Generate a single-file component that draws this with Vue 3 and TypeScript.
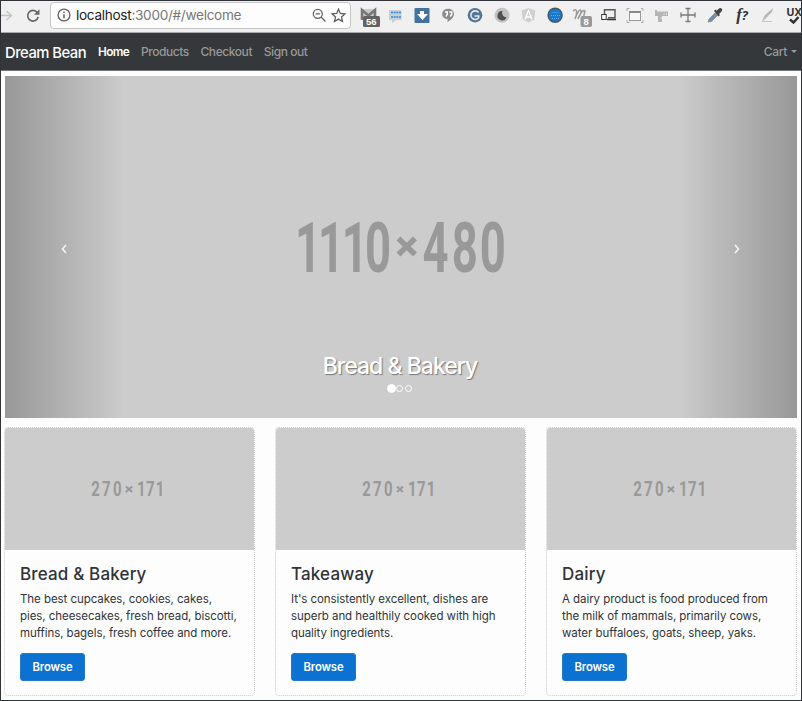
<script setup lang="ts">
interface Category {
  title: string
  lines: string[]
}

const links: string[] = ['Home', 'Products', 'Checkout', 'Sign out']

const categories: Category[] = [
  {
    title: 'Bread & Bakery',
    lines: ['The best cupcakes, cookies, cakes,', 'pies, cheesecakes, fresh bread, biscotti,', 'muffins, bagels, fresh coffee and more.'],
  },
  {
    title: 'Takeaway',
    lines: ["It's consistently excellent, dishes are", 'superb and healthily cooked with high', 'quality ingredients.'],
  },
  {
    title: 'Dairy',
    lines: ['A dairy product is food produced from', 'the milk of mammals, primarily cows,', 'water buffaloes, goats, sheep, yaks.'],
  },
]
</script>

<template>
  <div class="window">
    <header class="toolbar">
      <svg class="nav-icons" width="49" height="32" viewBox="0 0 49 32">
        <path d="M0 13.500H11M6.500 9l5 4.500-5 4.500" fill="none" stroke="#c4c4c4" stroke-width="1.300" />
        <path d="M37.300 10.600A5.300 5.300 0 1 0 38.200 14.800" fill="none" stroke="#686868" stroke-width="1.700" />
        <path d="M39.500 7.200v5.600h-5.600z" fill="#686868" />
      </svg>
      <div class="address">
        <svg width="14" height="14" viewBox="0 0 14 14">
          <circle cx="7" cy="7" r="5.900" fill="none" stroke="#606060" stroke-width="1.300" />
          <path d="M7 6.200v4M7 3.500v1.500" stroke="#606060" stroke-width="1.500" />
        </svg>
        <span class="url"><b>localhost</b>:3000/#/welcome</span>
        <svg class="zoom" width="15" height="15" viewBox="0 0 15 15" fill="none" stroke="#666" stroke-width="1.300">
          <circle cx="5.800" cy="5.800" r="4.500" /><path d="M9 9l4.500 4.500M3.700 5.800h4.200" />
        </svg>
        <svg width="15" height="15" viewBox="0 0 15 15" fill="none" stroke="#606060" stroke-width="1.300">
          <path d="M7.500 1.200l1.800 4.200 4.700.4-3.500 3.100 1 4.600-4-2.400-4 2.400 1-4.600L1 5.800l4.700-.4z" />
        </svg>
      </div>
      <div class="extensions">
        <svg viewBox="-13 -16 26.5 32">
          <path d="M-9-7H6V4H-9z" fill="#c8c8c8" /><path d="M-8 4v-10l6.500 5.500L5-6V4" fill="none" stroke="#777" stroke-width="2.600" />
          <rect x="-7" y="0" width="17" height="11" rx="1.500" fill="#626262" />
          <text x="1.200" y="9.100" class="badge">56</text>
        </svg>
        <svg viewBox="-13 -16 26.5 32">
          <path d="M-8-6H4.500V4H-1l-4 3V4h-3z" fill="#cacfd4" /><path d="M-6-3.500H4M-6 1H4" stroke="#2f8ade" stroke-width="1.500" stroke-dasharray="2 .7" />
        </svg>
        <svg viewBox="-13 -16 26.5 32">
          <rect x="-8.500" y="-8" width="15" height="15" rx="1" fill="#44729f" /><path d="M-3-5H1v3h4l-5.500 6L-6-2h3z" fill="#fff" />
        </svg>
        <svg viewBox="-13 -16 26.5 32">
          <path d="M-1.800-7.300c-3.500 0-6 2.200-6 5.300 0 3.200 2.600 5 5.300 5v3c3.500-2 6.500-4.800 6.500-8 0-3.100-2.300-5.300-5.800-5.300z" fill="#8c8c8c" /><path d="M-5-4h2.300v2.500l-1.500 2M-.7-4h2.400v2.500l-1.500 2" fill="none" stroke="#fff" stroke-width="1.500" />
        </svg>
        <svg viewBox="-13 -16 26.5 32">
          <circle cx="-1" cy="-.8" r="7.300" fill="#58738f" /><path d="M2.500-3.600a4.300 4.300 0 1 0 .2 5.200V0H-1.500" fill="none" stroke="#dceaf8" stroke-width="1.600" />
        </svg>
        <svg viewBox="-13 -16 26.5 32">
          <circle cx="-1" cy="-.7" r="7.500" fill="#c2c2c2" /><path d="M-.5-5a4.700 4.700 0 1 0 4 6.500A4.500 4.500 0 0 1-.5-5z" fill="#505050" />
        </svg>
        <svg viewBox="-13 -16 26.5 32">
          <path d="M-.5-8l6.800 2.400-1 9L-.5 6.500l-5.800-3.100-1-9z" fill="#cfcfcf" /><path d="M-4 3.500l3.500-9 3.500 9M-2.600 1h4.200" fill="none" stroke="#fff" stroke-width="1.300" />
        </svg>
        <svg viewBox="-13 -16 26.5 32">
          <circle cx="-.9" cy="-.8" r="7" fill="#187bd2" stroke="#505860" stroke-width="1.500" /><path d="M-4.500-3.500h8M-5-.500h9M-4 2.500h7" stroke="#78b5eb" stroke-width=".8" stroke-dasharray="1 1" />
        </svg>
        <svg viewBox="-13 -16 26.5 32">
          <path d="M-9-5c5-4 4 3 2 8 2-6 5-11 6-8s-3 6-3 8c2-6 6-10 7-8L1 3" fill="none" stroke="#999" stroke-width="1.500" />
          <rect x="-1.500" y="0" width="11.500" height="11" rx="2" fill="#999" /><text x="4.200" y="9.100" class="badge">8</text>
        </svg>
        <svg viewBox="-13 -16 26.5 32">
          <path d="M-4.500-2v-4.300H6v8H-1" fill="none" stroke="#555" stroke-width="1.400" /><rect x="-7.300" y="-1.500" width="4.500" height="5" fill="#fff" stroke="#333" /><path d="M-2 3.500h9" stroke="#333" stroke-width="1.500" />
        </svg>
        <svg viewBox="-13 -16 26.5 32">
          <rect x="-5.500" y="-4.500" width="11" height="9" fill="#f6f6f6" stroke="#999" /><path d="M-5.500-4h11" stroke="#888" stroke-width="2" /><path d="M-8-5v-2.500h2.500M6-7.500h2V-5M-8 4v2.500h2.500M6 6.500h2V4" fill="none" stroke="#aaa" />
        </svg>
        <svg viewBox="-13 -16 26.5 32">
          <path d="M-7-6h2v1.500H6V0H0v6h-4V0h-3z" fill="#b5b5b5" /><path d="M-2 2h2M2-3v2M4.500-3v2" stroke="#dedede" />
        </svg>
        <svg viewBox="-13 -16 26.5 32">
          <path d="M-7-1H7M0-7V5.500M-7-3.500v5M7-3.500v5M-2.500-7.500h5M-2.500 5.500h5" fill="none" stroke="#787878" stroke-width="1.300" />
        </svg>
        <svg viewBox="-13 -16 26.5 32">
          <path d="M-7 6l1-3 6-6 2.500 2.500-6 6z" fill="#6c8fae" stroke="#888" stroke-width=".7" /><path d="M-1-5L.500-6.500l1.300 1.300C4-8 5.500-8.500 6.800-7.200S6.500-4 4-2l1 1-1.500 1.500z" fill="#444" />
        </svg>
        <svg viewBox="-13 -16 26.5 32"><text x="1" y="4" class="font-query"><tspan class="letter-f">f</tspan>?</text></svg>
        <svg viewBox="-13 -16 26.5 32">
          <path d="M-6 5l3-6 8-7-1 4-8 8z" fill="#b8b8b8" /><path d="M-6 5.500H4" stroke="#c4c4c4" />
        </svg>
        <svg viewBox="-13 -16 26.5 32"><text x="0" y="-.200" class="ux">UX</text><path d="M-4 3.500L-.5 6.500l5-5.500" fill="none" stroke="#333" stroke-width="2.500" /></svg>
      </div>
    </header>

    <nav class="navbar">
      <span class="brand">Dream Bean</span>
      <a v-for="(link, i) in links" :key="link" class="link" :class="{ active: i === 0 }">{{ link }}</a>
      <a class="cart">Cart<i class="caret"></i></a>
    </nav>

    <main>
      <section class="carousel">
        <svg class="slide" viewBox="0 0 792 342">
          <text transform="scale(.65 1)" y="196" x="446 481.500 518 554">1110</text>
          <text transform="scale(.65 1)" y="196" x="642.500 687.500 730.500">480</text>
          <path d="M393.500 162.500l16.500 16M410 162.500l-16.500 16" stroke="#999" stroke-width="5.500" />
          <path d="M61 169l-3.500 4 3.500 4M730 169l3.500 4-3.500 4" fill="none" stroke="#f4f4f4" stroke-width="1.600" />
        </svg>
        <div class="caption">
          <h3>Bread &amp; Bakery</h3>
          <div class="dots"><i class="on"></i><i></i><i></i></div>
        </div>
      </section>

      <section class="cards">
        <article v-for="c in categories" :key="c.title" class="card">
          <svg class="thumb" viewBox="0 0 249 122">
            <text transform="scale(.75 1)" y="68.500" x="115 129.500 144">270</text>
            <text transform="scale(.75 1)" y="68.500" x="176 188 201">171</text>
            <path d="M121 58.500l6 5.500M127 58.500l-6 5.500" stroke="#999" stroke-width="2" />
          </svg>
          <div class="body">
            <h4>{{ c.title }}</h4>
            <p><span v-for="line in c.lines" :key="line">{{ line }}</span></p>
            <button>Browse</button>
          </div>
        </article>
      </section>
    </main>
  </div>
</template>

<style>
body { margin: 0; overflow: hidden; }
</style>

<style scoped>
* { box-sizing: border-box; }
.window { width: 802px; height: 701px; border: 1px solid #303438; background: #fdfdfd; font-family: Inter, sans-serif; color: #303438; overflow: hidden; }
.toolbar { height: 32px; display: flex; background: #f0f0f0; border-bottom: 1px solid #aaa; margin-left: -1px; overflow: hidden; }
.nav-icons { flex: none; margin-top: 1px; margin-right: 1px; }
.address { width: 301px; height: 27px; margin-top: 1px; padding: 0 4px 1px 6px; display: flex; align-items: center; flex: none; background: #fdfdfd; border: 1px solid #c6c6c6; border-radius: 4px; }
.url { font-size: 13.6px; letter-spacing: -.3px; margin-left: 5px; color: #777; white-space: nowrap; }
.url b { font-weight: 400; color: #222; }
.zoom { margin-left: auto; margin-right: 4px; }
.extensions { display: flex; flex: none; margin-left: 6px; }
.extensions svg { width: 26.5px; height: 32px; flex: none; margin-top: -1px; overflow: visible; }
.badge { font: 700 9.5px "Liberation Sans", sans-serif; fill: #fff; text-anchor: middle; }
.font-query { font: italic 700 13px "Open Sans", sans-serif; fill: #333; text-anchor: middle; }
.letter-f { font: italic 700 17px "Liberation Serif", serif; }
.ux { font: 700 11px "Open Sans", sans-serif; fill: #333; text-anchor: middle; }
.navbar { height: 38px; padding: 0 4px 0 4px; display: flex; align-items: center; background: #34383b; border-bottom: 1px solid #777; }
.brand { font-size: 14.8px; font-weight: 500; letter-spacing: -.52px; color: #fff; width: 93px; white-space: nowrap; padding-top: 2px; }
.link, .cart { font-size: 12px; font-weight: 500; letter-spacing: -.43px; color: #999; margin-right: 11.7px; white-space: nowrap; }
.link.active { color: #fff; font-weight: 600; font-size: 11.8px; letter-spacing: -.6px; }
.cart { margin-left: auto; margin-right: 0; display: flex; align-items: center; letter-spacing: -.3px; }
.caret { border: 3px solid transparent; border-top-color: #999; border-bottom: 0; margin-left: 4px; }
main { padding: 5px 4px 0; }
.carousel { position: relative; width: 792px; height: 342px; background: linear-gradient(90deg, #989898 0, #ccc 15%, #ccc 85%, #989898 100%); }
.slide { display: block; width: 792px; height: 342px; }
.slide text { font: 700 70px Roboto, sans-serif; fill: #999; }
.caption { position: absolute; left: 0; right: 2px; top: 275px; text-align: center; }
h3 { margin: 0; font-size: 23px; font-weight: 500; line-height: 30px; letter-spacing: -.98px; color: #fff; text-shadow: 1px 1px 1px #777; }
.dots { display: flex; justify-content: center; align-items: center; gap: 1px; height: 10px; margin-top: 2px; }
.dots i { width: 7px; height: 7px; border: 1px solid #fff; border-radius: 50%; margin-right: 1px; }
.dots .on { width: 9px; height: 9px; background: #fff; margin-right: -1px; }
.cards { display: grid; grid-template-columns: repeat(3, 251px); gap: 20px; margin-top: 9px; margin-left: -1px; }
.card { height: 269px; border: 1px dotted #ccc; border-radius: 4px; overflow: hidden; }
.thumb { display: block; width: 249px; height: 122px; background: #ccc; }
.thumb text { font: 700 20px Roboto, sans-serif; fill: #999; }
.body { padding: 14px 15px; }
h4 { margin: 0 0 7px; font-size: 17px; font-weight: 500; line-height: 20px; letter-spacing: .15px; }
p { margin: 0 0 11px; font-size: 11.5px; line-height: 17px; letter-spacing: -.06px; }
p span { display: block; white-space: nowrap; }
button { display: block; width: 65px; height: 28px; padding: 0; border: 1px solid #2477c3; border-radius: 3px; background: #0c72d2; color: #fff; font: 600 11.3px Inter, sans-serif; letter-spacing: -.15px; }
</style>
